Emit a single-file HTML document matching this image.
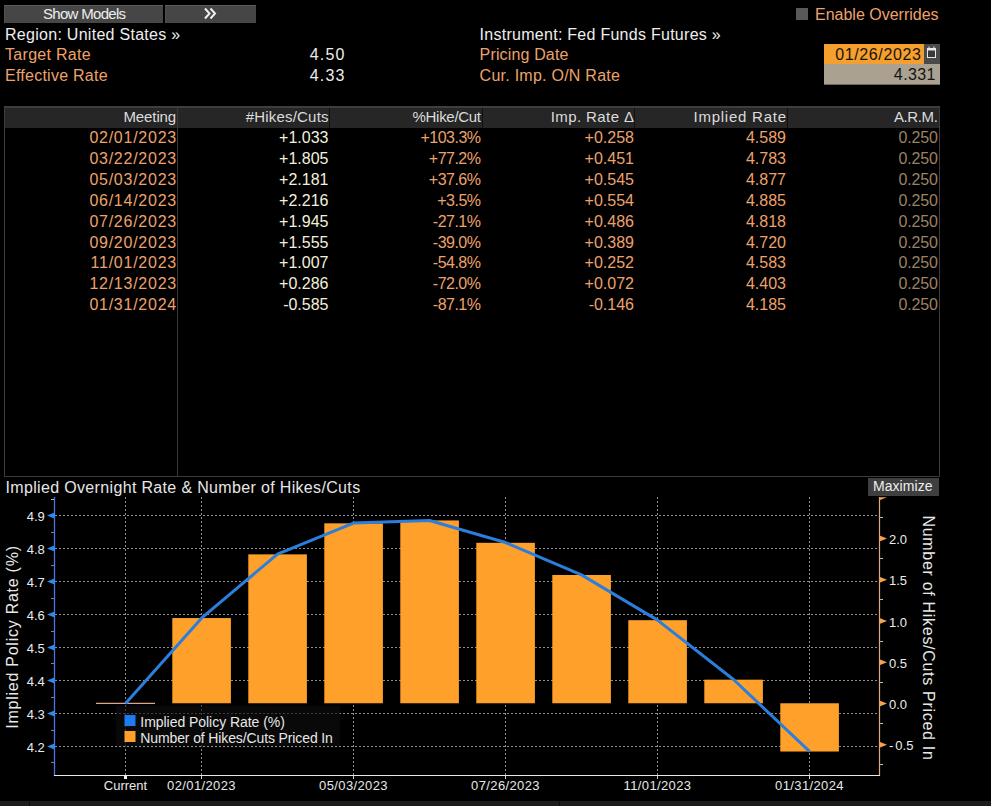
<!DOCTYPE html>
<html><head><meta charset="utf-8"><style>
html,body{margin:0;padding:0;background:#000;width:991px;height:806px;overflow:hidden;}
body{position:relative;font-family:"Liberation Sans", sans-serif;}
.t{position:absolute;white-space:nowrap;font-family:"Liberation Sans", sans-serif;}
</style></head><body>
<div style="position:absolute;left:4px;top:5px;width:159px;height:18px;background:#464646;border-top:1px solid #5c5c5c;border-left:1px solid #505050;box-sizing:border-box;"></div>
<div style="position:absolute;left:165px;top:5px;width:91px;height:18px;background:#464646;border-top:1px solid #5c5c5c;border-left:1px solid #505050;box-sizing:border-box;"></div>
<div class="t" style="left:43px;top:6.10px;font-size:15px;line-height:15px;color:#eeeeee;letter-spacing:-0.7px;">Show Models</div>
<svg style="position:absolute;left:0;top:0" width="300" height="30"><polyline points="205,8.5 209.5,13.5 205,18.5" fill="none" stroke="#f0f0f0" stroke-width="2"/><polyline points="210.5,8.5 215,13.5 210.5,18.5" fill="none" stroke="#f0f0f0" stroke-width="2"/></svg>
<div class="t" style="left:5px;top:27.46px;font-size:16px;line-height:16px;color:#eeeeee;letter-spacing:0.28px;">Region: United States »</div>
<div class="t" style="left:5px;top:47.46px;font-size:16px;line-height:16px;color:#eda26c;letter-spacing:0.3px;">Target Rate</div>
<div class="t" style="left:5px;top:68.46px;font-size:16px;line-height:16px;color:#eda26c;letter-spacing:0.25px;">Effective Rate</div>
<div class="t" style="right:645.30px;top:47.46px;font-size:16px;line-height:16px;color:#eeeeee;letter-spacing:1.2px;">4.50</div>
<div class="t" style="right:645.30px;top:68.46px;font-size:16px;line-height:16px;color:#eeeeee;letter-spacing:1.2px;">4.33</div>
<div class="t" style="left:479.6px;top:27.46px;font-size:16px;line-height:16px;color:#eeeeee;letter-spacing:0.27px;">Instrument: Fed Funds Futures »</div>
<div class="t" style="left:479.6px;top:47.46px;font-size:16px;line-height:16px;color:#eda26c;letter-spacing:0.15px;">Pricing Date</div>
<div class="t" style="left:479.6px;top:68.46px;font-size:16px;line-height:16px;color:#eda26c;letter-spacing:0.25px;">Cur. Imp. O/N Rate</div>
<div style="position:absolute;left:796px;top:8px;width:11.5px;height:12px;background:#595959;"></div>
<div class="t" style="left:815px;top:7.46px;font-size:16px;line-height:16px;color:#eda26c;letter-spacing:0px;">Enable Overrides</div>
<div style="position:absolute;left:824px;top:44px;width:100px;height:19.5px;background:#f59f2e;"></div>
<div style="position:absolute;left:924px;top:44px;width:15.5px;height:20px;background:#4a4a4a;"></div>
<svg style="position:absolute;left:924px;top:44px" width="16" height="20"><rect x="3.5" y="4.5" width="8" height="9" fill="#3a3a3a" stroke="#e8e8e8" stroke-width="1"/><rect x="3.5" y="4.5" width="8" height="2" fill="#e8e8e8"/><line x1="5" y1="2.5" x2="5" y2="4.5" stroke="#e8e8e8"/><line x1="10" y1="2.5" x2="10" y2="4.5" stroke="#e8e8e8"/></svg>
<div class="t" style="right:69.60px;top:47.46px;font-size:16px;line-height:16px;color:#1a1208;letter-spacing:0.6px;">01/26/2023</div>
<div style="position:absolute;left:824px;top:64px;width:115.5px;height:20.5px;background:#aaa191;border-bottom:1px solid #6e685c;box-sizing:border-box;"></div>
<div class="t" style="right:55.10px;top:67.46px;font-size:16px;line-height:16px;color:#141414;letter-spacing:0.4px;">4.331</div>
<div style="position:absolute;left:4px;top:106px;width:935.5px;height:370.5px;border:1px solid #3c3c3c;border-top:2px solid #3e3e3e;box-sizing:border-box"></div>
<div style="position:absolute;left:5px;top:108px;width:933.5px;height:20px;background:#262626;"></div>
<div style="position:absolute;left:176.5px;top:106px;width:1.5px;height:370.5px;background:#3a3a3a;"></div>
<div style="position:absolute;left:329.0px;top:108px;width:1px;height:20px;background:#101010;"></div>
<div style="position:absolute;left:481.5px;top:108px;width:1px;height:20px;background:#101010;"></div>
<div style="position:absolute;left:634.2px;top:108px;width:1px;height:20px;background:#101010;"></div>
<div style="position:absolute;left:786.5px;top:108px;width:1px;height:20px;background:#101010;"></div>
<div class="t" style="right:814.90px;top:108.90px;font-size:15px;line-height:15px;color:#dcdcdc;letter-spacing:-0.1px;">Meeting</div>
<div class="t" style="right:662.30px;top:108.90px;font-size:15px;line-height:15px;color:#dcdcdc;letter-spacing:0.2px;">#Hikes/Cuts</div>
<div class="t" style="right:510.30px;top:108.90px;font-size:15px;line-height:15px;color:#dcdcdc;letter-spacing:-0.3px;">%Hike/Cut</div>
<div class="t" style="right:356.60px;top:108.90px;font-size:15px;line-height:15px;color:#dcdcdc;letter-spacing:0.4px;">Imp. Rate Δ</div>
<div class="t" style="right:204.25px;top:108.90px;font-size:15px;line-height:15px;color:#dcdcdc;letter-spacing:0.75px;">Implied Rate</div>
<div class="t" style="right:53.60px;top:108.90px;font-size:15px;line-height:15px;color:#dcdcdc;letter-spacing:-0.4px;">A.R.M.</div>
<div class="t" style="right:814.05px;top:130.46px;font-size:16px;line-height:16px;color:#eda26c;letter-spacing:0.75px;">02/01/2023</div>
<div class="t" style="right:662.50px;top:130.46px;font-size:16px;line-height:16px;color:#f2f0dc;letter-spacing:0.0px;">+1.033</div>
<div class="t" style="right:510.50px;top:130.46px;font-size:16px;line-height:16px;color:#eda26c;letter-spacing:-0.5px;">+103.3%</div>
<div class="t" style="right:357.00px;top:130.46px;font-size:16px;line-height:16px;color:#eda26c;letter-spacing:0.0px;">+0.258</div>
<div class="t" style="right:205.00px;top:130.46px;font-size:16px;line-height:16px;color:#eda26c;letter-spacing:0.0px;">4.589</div>
<div class="t" style="right:53.40px;top:130.46px;font-size:16px;line-height:16px;color:#9c8262;letter-spacing:-0.2px;">0.250</div>
<div class="t" style="right:814.05px;top:151.26px;font-size:16px;line-height:16px;color:#eda26c;letter-spacing:0.75px;">03/22/2023</div>
<div class="t" style="right:662.50px;top:151.26px;font-size:16px;line-height:16px;color:#f2f0dc;letter-spacing:0.0px;">+1.805</div>
<div class="t" style="right:510.50px;top:151.26px;font-size:16px;line-height:16px;color:#eda26c;letter-spacing:-0.5px;">+77.2%</div>
<div class="t" style="right:357.00px;top:151.26px;font-size:16px;line-height:16px;color:#eda26c;letter-spacing:0.0px;">+0.451</div>
<div class="t" style="right:205.00px;top:151.26px;font-size:16px;line-height:16px;color:#eda26c;letter-spacing:0.0px;">4.783</div>
<div class="t" style="right:53.40px;top:151.26px;font-size:16px;line-height:16px;color:#9c8262;letter-spacing:-0.2px;">0.250</div>
<div class="t" style="right:814.05px;top:172.16px;font-size:16px;line-height:16px;color:#eda26c;letter-spacing:0.75px;">05/03/2023</div>
<div class="t" style="right:662.50px;top:172.16px;font-size:16px;line-height:16px;color:#f2f0dc;letter-spacing:0.0px;">+2.181</div>
<div class="t" style="right:510.50px;top:172.16px;font-size:16px;line-height:16px;color:#eda26c;letter-spacing:-0.5px;">+37.6%</div>
<div class="t" style="right:357.00px;top:172.16px;font-size:16px;line-height:16px;color:#eda26c;letter-spacing:0.0px;">+0.545</div>
<div class="t" style="right:205.00px;top:172.16px;font-size:16px;line-height:16px;color:#eda26c;letter-spacing:0.0px;">4.877</div>
<div class="t" style="right:53.40px;top:172.16px;font-size:16px;line-height:16px;color:#9c8262;letter-spacing:-0.2px;">0.250</div>
<div class="t" style="right:814.05px;top:192.96px;font-size:16px;line-height:16px;color:#eda26c;letter-spacing:0.75px;">06/14/2023</div>
<div class="t" style="right:662.50px;top:192.96px;font-size:16px;line-height:16px;color:#f2f0dc;letter-spacing:0.0px;">+2.216</div>
<div class="t" style="right:510.50px;top:192.96px;font-size:16px;line-height:16px;color:#eda26c;letter-spacing:-0.5px;">+3.5%</div>
<div class="t" style="right:357.00px;top:192.96px;font-size:16px;line-height:16px;color:#eda26c;letter-spacing:0.0px;">+0.554</div>
<div class="t" style="right:205.00px;top:192.96px;font-size:16px;line-height:16px;color:#eda26c;letter-spacing:0.0px;">4.885</div>
<div class="t" style="right:53.40px;top:192.96px;font-size:16px;line-height:16px;color:#9c8262;letter-spacing:-0.2px;">0.250</div>
<div class="t" style="right:814.05px;top:213.86px;font-size:16px;line-height:16px;color:#eda26c;letter-spacing:0.75px;">07/26/2023</div>
<div class="t" style="right:662.50px;top:213.86px;font-size:16px;line-height:16px;color:#f2f0dc;letter-spacing:0.0px;">+1.945</div>
<div class="t" style="right:510.50px;top:213.86px;font-size:16px;line-height:16px;color:#eda26c;letter-spacing:-0.5px;">-27.1%</div>
<div class="t" style="right:357.00px;top:213.86px;font-size:16px;line-height:16px;color:#eda26c;letter-spacing:0.0px;">+0.486</div>
<div class="t" style="right:205.00px;top:213.86px;font-size:16px;line-height:16px;color:#eda26c;letter-spacing:0.0px;">4.818</div>
<div class="t" style="right:53.40px;top:213.86px;font-size:16px;line-height:16px;color:#9c8262;letter-spacing:-0.2px;">0.250</div>
<div class="t" style="right:814.05px;top:234.66px;font-size:16px;line-height:16px;color:#eda26c;letter-spacing:0.75px;">09/20/2023</div>
<div class="t" style="right:662.50px;top:234.66px;font-size:16px;line-height:16px;color:#f2f0dc;letter-spacing:0.0px;">+1.555</div>
<div class="t" style="right:510.50px;top:234.66px;font-size:16px;line-height:16px;color:#eda26c;letter-spacing:-0.5px;">-39.0%</div>
<div class="t" style="right:357.00px;top:234.66px;font-size:16px;line-height:16px;color:#eda26c;letter-spacing:0.0px;">+0.389</div>
<div class="t" style="right:205.00px;top:234.66px;font-size:16px;line-height:16px;color:#eda26c;letter-spacing:0.0px;">4.720</div>
<div class="t" style="right:53.40px;top:234.66px;font-size:16px;line-height:16px;color:#9c8262;letter-spacing:-0.2px;">0.250</div>
<div class="t" style="right:814.05px;top:255.46px;font-size:16px;line-height:16px;color:#eda26c;letter-spacing:0.75px;">11/01/2023</div>
<div class="t" style="right:662.50px;top:255.46px;font-size:16px;line-height:16px;color:#f2f0dc;letter-spacing:0.0px;">+1.007</div>
<div class="t" style="right:510.50px;top:255.46px;font-size:16px;line-height:16px;color:#eda26c;letter-spacing:-0.5px;">-54.8%</div>
<div class="t" style="right:357.00px;top:255.46px;font-size:16px;line-height:16px;color:#eda26c;letter-spacing:0.0px;">+0.252</div>
<div class="t" style="right:205.00px;top:255.46px;font-size:16px;line-height:16px;color:#eda26c;letter-spacing:0.0px;">4.583</div>
<div class="t" style="right:53.40px;top:255.46px;font-size:16px;line-height:16px;color:#9c8262;letter-spacing:-0.2px;">0.250</div>
<div class="t" style="right:814.05px;top:276.36px;font-size:16px;line-height:16px;color:#eda26c;letter-spacing:0.75px;">12/13/2023</div>
<div class="t" style="right:662.50px;top:276.36px;font-size:16px;line-height:16px;color:#f2f0dc;letter-spacing:0.0px;">+0.286</div>
<div class="t" style="right:510.50px;top:276.36px;font-size:16px;line-height:16px;color:#eda26c;letter-spacing:-0.5px;">-72.0%</div>
<div class="t" style="right:357.00px;top:276.36px;font-size:16px;line-height:16px;color:#eda26c;letter-spacing:0.0px;">+0.072</div>
<div class="t" style="right:205.00px;top:276.36px;font-size:16px;line-height:16px;color:#eda26c;letter-spacing:0.0px;">4.403</div>
<div class="t" style="right:53.40px;top:276.36px;font-size:16px;line-height:16px;color:#9c8262;letter-spacing:-0.2px;">0.250</div>
<div class="t" style="right:814.05px;top:297.16px;font-size:16px;line-height:16px;color:#eda26c;letter-spacing:0.75px;">01/31/2024</div>
<div class="t" style="right:662.50px;top:297.16px;font-size:16px;line-height:16px;color:#f2f0dc;letter-spacing:0.0px;">-0.585</div>
<div class="t" style="right:510.50px;top:297.16px;font-size:16px;line-height:16px;color:#eda26c;letter-spacing:-0.5px;">-87.1%</div>
<div class="t" style="right:357.00px;top:297.16px;font-size:16px;line-height:16px;color:#eda26c;letter-spacing:0.0px;">-0.146</div>
<div class="t" style="right:205.00px;top:297.16px;font-size:16px;line-height:16px;color:#eda26c;letter-spacing:0.0px;">4.185</div>
<div class="t" style="right:53.40px;top:297.16px;font-size:16px;line-height:16px;color:#9c8262;letter-spacing:-0.2px;">0.250</div>
<div class="t" style="left:5.5px;top:480.46px;font-size:16px;line-height:16px;color:#e6e6e6;letter-spacing:0.34px;">Implied Overnight Rate &amp; Number of Hikes/Cuts</div>
<div style="position:absolute;left:868px;top:478px;width:71px;height:18px;background:#3f3f40;"></div>
<div class="t" style="left:873px;top:479.15px;font-size:14px;line-height:14px;color:#eeeeee;letter-spacing:0.05px;">Maximize</div>
<svg style="position:absolute;left:0;top:0" width="991" height="806">
<line x1="55" y1="746.5" x2="879" y2="746.5" stroke="#8e8e8e" stroke-width="1" stroke-dasharray="2,2"/>
<line x1="55" y1="713.5" x2="879" y2="713.5" stroke="#8e8e8e" stroke-width="1" stroke-dasharray="2,2"/>
<line x1="55" y1="680.5" x2="879" y2="680.5" stroke="#8e8e8e" stroke-width="1" stroke-dasharray="2,2"/>
<line x1="55" y1="647.5" x2="879" y2="647.5" stroke="#8e8e8e" stroke-width="1" stroke-dasharray="2,2"/>
<line x1="55" y1="614.5" x2="879" y2="614.5" stroke="#8e8e8e" stroke-width="1" stroke-dasharray="2,2"/>
<line x1="55" y1="581.5" x2="879" y2="581.5" stroke="#8e8e8e" stroke-width="1" stroke-dasharray="2,2"/>
<line x1="55" y1="548.5" x2="879" y2="548.5" stroke="#8e8e8e" stroke-width="1" stroke-dasharray="2,2"/>
<line x1="55" y1="515.5" x2="879" y2="515.5" stroke="#8e8e8e" stroke-width="1" stroke-dasharray="2,2"/>
<line x1="125.5" y1="497" x2="125.5" y2="775" stroke="#8e8e8e" stroke-width="1" stroke-dasharray="2,2"/>
<line x1="201.5" y1="497" x2="201.5" y2="775" stroke="#8e8e8e" stroke-width="1" stroke-dasharray="2,2"/>
<line x1="353.5" y1="497" x2="353.5" y2="775" stroke="#8e8e8e" stroke-width="1" stroke-dasharray="2,2"/>
<line x1="505.5" y1="497" x2="505.5" y2="775" stroke="#8e8e8e" stroke-width="1" stroke-dasharray="2,2"/>
<line x1="657.5" y1="497" x2="657.5" y2="775" stroke="#8e8e8e" stroke-width="1" stroke-dasharray="2,2"/>
<line x1="809.5" y1="497" x2="809.5" y2="775" stroke="#8e8e8e" stroke-width="1" stroke-dasharray="2,2"/>
<rect x="116" y="705.5" width="224" height="42.5" fill="#0e0e10" fill-opacity="0.62"/><line x1="115" y1="746.5" x2="341" y2="746.5" stroke="#8e8e8e" stroke-width="1" stroke-dasharray="2,2"/>
<rect x="96" y="702.77" width="59" height="1.2" fill="#e6ab84"/>
<rect x="172.30" y="618.05" width="58.6" height="85.22" fill="#ffa02a"/>
<rect x="248.30" y="554.36" width="58.6" height="148.91" fill="#ffa02a"/>
<rect x="324.30" y="523.34" width="58.6" height="179.93" fill="#ffa02a"/>
<rect x="400.30" y="520.45" width="58.6" height="182.82" fill="#ffa02a"/>
<rect x="476.30" y="542.81" width="58.6" height="160.46" fill="#ffa02a"/>
<rect x="552.30" y="574.98" width="58.6" height="128.29" fill="#ffa02a"/>
<rect x="628.30" y="620.19" width="58.6" height="83.08" fill="#ffa02a"/>
<rect x="704.30" y="679.67" width="58.6" height="23.60" fill="#ffa02a"/>
<rect x="780.30" y="703.27" width="58.6" height="48.26" fill="#ffa02a"/>
<polyline points="125.5,703.60 201.5,618.13 277.5,554.11 353.5,523.09 429.5,520.45 505.5,542.56 581.5,574.90 657.5,620.11 733.5,679.51 809.5,751.45" fill="none" stroke="#2b7edb" stroke-width="3" stroke-linejoin="round"/>
<rect x="124.5" y="715" width="11" height="11" fill="#1f7cf0"/>
<rect x="124.5" y="731" width="11" height="11" fill="#ffa02a"/>
<line x1="54.5" y1="497" x2="54.5" y2="776" stroke="#4e72e0" stroke-width="1.3"/>
<line x1="51" y1="499.5" x2="54" y2="499.5" stroke="#aab4d8" stroke-width="1"/>
<polygon points="47,746.50 54.5,743.50 54.5,749.50" fill="#2a8cf0"/>
<polygon points="47,713.50 54.5,710.50 54.5,716.50" fill="#2a8cf0"/>
<polygon points="47,680.50 54.5,677.50 54.5,683.50" fill="#2a8cf0"/>
<polygon points="47,647.50 54.5,644.50 54.5,650.50" fill="#2a8cf0"/>
<polygon points="47,614.50 54.5,611.50 54.5,617.50" fill="#2a8cf0"/>
<polygon points="47,581.50 54.5,578.50 54.5,584.50" fill="#2a8cf0"/>
<polygon points="47,548.50 54.5,545.50 54.5,551.50" fill="#2a8cf0"/>
<polygon points="47,515.50 54.5,512.50 54.5,518.50" fill="#2a8cf0"/>
<line x1="51" y1="730.5" x2="54" y2="730.5" stroke="#6a7fc0" stroke-width="1"/>
<line x1="51" y1="697.5" x2="54" y2="697.5" stroke="#6a7fc0" stroke-width="1"/>
<line x1="51" y1="663.5" x2="54" y2="663.5" stroke="#6a7fc0" stroke-width="1"/>
<line x1="51" y1="631.5" x2="54" y2="631.5" stroke="#6a7fc0" stroke-width="1"/>
<line x1="51" y1="598.5" x2="54" y2="598.5" stroke="#6a7fc0" stroke-width="1"/>
<line x1="51" y1="565.5" x2="54" y2="565.5" stroke="#6a7fc0" stroke-width="1"/>
<line x1="51" y1="532.5" x2="54" y2="532.5" stroke="#6a7fc0" stroke-width="1"/>
<line x1="51" y1="762.5" x2="54" y2="762.5" stroke="#6a7fc0" stroke-width="1"/>
<line x1="879.5" y1="497" x2="879.5" y2="776" stroke="#d8aa88" stroke-width="1.2"/>
<polygon points="887,744.85 879.5,741.85 879.5,747.85" fill="#f5a24a"/>
<polygon points="887,703.60 879.5,700.60 879.5,706.60" fill="#f5a24a"/>
<polygon points="887,662.35 879.5,659.35 879.5,665.35" fill="#f5a24a"/>
<polygon points="887,621.10 879.5,618.10 879.5,624.10" fill="#f5a24a"/>
<polygon points="887,579.85 879.5,576.85 879.5,582.85" fill="#f5a24a"/>
<polygon points="887,538.60 879.5,535.60 879.5,541.60" fill="#f5a24a"/>
<polygon points="887,497.35 879.5,497.35 879.5,500.35" fill="#f5a24a"/>
<line x1="880" y1="764.5" x2="883" y2="764.5" stroke="#d4b494" stroke-width="1"/>
<line x1="880" y1="723.5" x2="883" y2="723.5" stroke="#d4b494" stroke-width="1"/>
<line x1="880" y1="682.5" x2="883" y2="682.5" stroke="#d4b494" stroke-width="1"/>
<line x1="880" y1="641.5" x2="883" y2="641.5" stroke="#d4b494" stroke-width="1"/>
<line x1="880" y1="599.5" x2="883" y2="599.5" stroke="#d4b494" stroke-width="1"/>
<line x1="880" y1="558.5" x2="883" y2="558.5" stroke="#d4b494" stroke-width="1"/>
<line x1="880" y1="517.5" x2="883" y2="517.5" stroke="#d4b494" stroke-width="1"/>
<line x1="54" y1="775.5" x2="880" y2="775.5" stroke="#e8e8e8" stroke-width="1"/>
<rect x="124" y="775" width="3" height="4" fill="#f0f0f0"/>
<line x1="201.5" y1="776" x2="201.5" y2="779" stroke="#cfcfcf" stroke-width="1"/>
<line x1="353.5" y1="776" x2="353.5" y2="779" stroke="#cfcfcf" stroke-width="1"/>
<line x1="505.5" y1="776" x2="505.5" y2="779" stroke="#cfcfcf" stroke-width="1"/>
<line x1="657.5" y1="776" x2="657.5" y2="779" stroke="#cfcfcf" stroke-width="1"/>
<line x1="809.5" y1="776" x2="809.5" y2="779" stroke="#cfcfcf" stroke-width="1"/>
</svg>
<div class="t" style="left:140.3px;top:714.75px;font-size:14px;line-height:14px;color:#e8e8e8;letter-spacing:-0.04px;">Implied Policy Rate (%)</div>
<div class="t" style="left:140.3px;top:731.15px;font-size:14px;line-height:14px;color:#e8e8e8;letter-spacing:-0.12px;">Number of Hikes/Cuts Priced In</div>
<div class="t" style="right:946.20px;top:741.10px;font-size:13px;line-height:13px;color:#ececec;letter-spacing:0px;">4.2</div>
<div class="t" style="right:946.20px;top:708.10px;font-size:13px;line-height:13px;color:#ececec;letter-spacing:0px;">4.3</div>
<div class="t" style="right:946.20px;top:675.10px;font-size:13px;line-height:13px;color:#ececec;letter-spacing:0px;">4.4</div>
<div class="t" style="right:946.20px;top:642.10px;font-size:13px;line-height:13px;color:#ececec;letter-spacing:0px;">4.5</div>
<div class="t" style="right:946.20px;top:609.10px;font-size:13px;line-height:13px;color:#ececec;letter-spacing:0px;">4.6</div>
<div class="t" style="right:946.20px;top:576.10px;font-size:13px;line-height:13px;color:#ececec;letter-spacing:0px;">4.7</div>
<div class="t" style="right:946.20px;top:543.10px;font-size:13px;line-height:13px;color:#ececec;letter-spacing:0px;">4.8</div>
<div class="t" style="right:946.20px;top:510.10px;font-size:13px;line-height:13px;color:#ececec;letter-spacing:0px;">4.9</div>
<div class="t" style="left:889px;top:739.40px;font-size:13px;line-height:13px;color:#ececec;letter-spacing:0px;"><span style="letter-spacing:2px">-</span>0.5</div>
<div class="t" style="left:889px;top:698.20px;font-size:13px;line-height:13px;color:#ececec;letter-spacing:0px;">0.0</div>
<div class="t" style="left:889px;top:656.90px;font-size:13px;line-height:13px;color:#ececec;letter-spacing:0px;">0.5</div>
<div class="t" style="left:889px;top:615.70px;font-size:13px;line-height:13px;color:#ececec;letter-spacing:0px;">1.0</div>
<div class="t" style="left:889px;top:574.40px;font-size:13px;line-height:13px;color:#ececec;letter-spacing:0px;">1.5</div>
<div class="t" style="left:889px;top:533.20px;font-size:13px;line-height:13px;color:#ececec;letter-spacing:0px;">2.0</div>
<div class="t" style="left:65.5px;width:120px;text-align:center;top:778.69px;font-size:13px;line-height:13px;color:#e8e8e8;letter-spacing:0px">Current</div>
<div class="t" style="left:141.5px;width:120px;text-align:center;top:778.69px;font-size:13px;line-height:13px;color:#e8e8e8;letter-spacing:0.38px">02/01/2023</div>
<div class="t" style="left:293.5px;width:120px;text-align:center;top:778.69px;font-size:13px;line-height:13px;color:#e8e8e8;letter-spacing:0.38px">05/03/2023</div>
<div class="t" style="left:445.5px;width:120px;text-align:center;top:778.69px;font-size:13px;line-height:13px;color:#e8e8e8;letter-spacing:0.38px">07/26/2023</div>
<div class="t" style="left:597.5px;width:120px;text-align:center;top:778.69px;font-size:13px;line-height:13px;color:#e8e8e8;letter-spacing:0.38px">11/01/2023</div>
<div class="t" style="left:749.5px;width:120px;text-align:center;top:778.69px;font-size:13px;line-height:13px;color:#e8e8e8;letter-spacing:0.38px">01/31/2024</div>
<div class="t" style="left:12.8px;top:637px;font-size:16px;line-height:16px;color:#e8e8e8;letter-spacing:0.75px;transform:translate(-50%,-50%) rotate(-90deg);">Implied Policy Rate (%)</div>
<div class="t" style="left:928px;top:637.5px;font-size:16px;line-height:16px;color:#e8e8e8;letter-spacing:0.7px;transform:translate(-50%,-50%) rotate(90deg);">Number of Hikes/Cuts Priced In</div>
<div style="position:absolute;left:0px;top:801px;width:991px;height:5px;background:#1c1c1c;"></div>
<div style="position:absolute;left:29px;top:801px;width:1px;height:5px;background:#0a0a0a;"></div>
<div style="position:absolute;left:559px;top:801px;width:1px;height:5px;background:#0c0c0c;"></div>
</body></html>
